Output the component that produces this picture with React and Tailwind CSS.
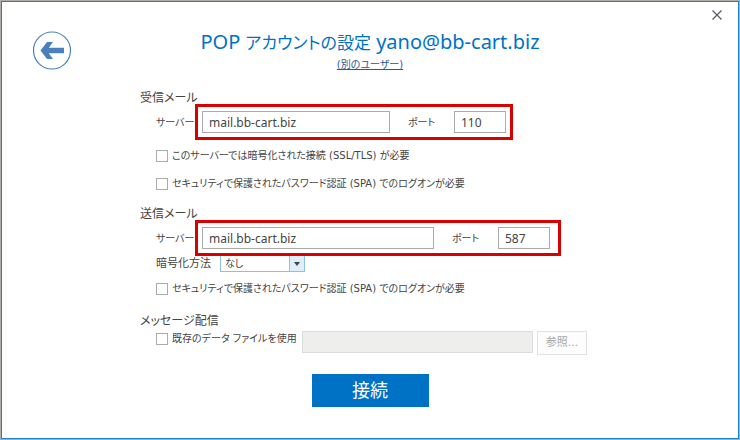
import React, { useState } from 'react';

const inputClass = "h-[22px] border border-[#ababab] bg-white px-1.5 font-['Noto_Sans',sans-serif] text-xs text-[#444] outline-none";

const BackIcon = () => (
  <svg width="40" height="40" viewBox="0 0 40 40" fill="none">
    <circle cx="20" cy="20.5" r="18.5" stroke="#4a80bd" strokeWidth="1.2" />
    <path d="M8.5 20.5 L15 12 H21 L16.8 17.8 H32 V23.2 H16.8 L21 29 H15 Z" fill="#4a80bd" />
  </svg>
);

const CloseIcon = () => (
  <svg width="10" height="10" viewBox="0 0 10 10" stroke="#555" strokeWidth="1.1">
    <path d="M0.5 0.5 L9.5 9.5 M9.5 0.5 L0.5 9.5" />
  </svg>
);

const CheckOption = ({ id, label }) => {
  const [checked, setChecked] = useState(false);

  return (
    <div className="flex h-4 items-center gap-1">
      <input
        id={id}
        type="checkbox"
        checked={checked}
        onChange={(e) => setChecked(e.target.checked)}
        className="size-3 shrink-0 appearance-none border border-[#ababab] bg-white checked:bg-[#0072c6]"
      />
      <label htmlFor={id} className="whitespace-nowrap text-[10px] leading-4">
        {label}
      </label>
    </div>
  );
};

const ServerRow = ({ id, server, port, boxClass, serverWidth }) => (
  <div className="flex items-center pl-4">
    <label htmlFor={`${id}-server`} className="w-[39px] whitespace-nowrap text-[10px]">
      サーバー
    </label>
    <div className={`flex h-9 items-center border-3 border-[#d90000] pl-1 ${boxClass}`}>
      <input id={`${id}-server`} defaultValue={server} className={`${inputClass} ${serverWidth}`} />
      <label htmlFor={`${id}-port`} className="w-16 pl-[18px] text-[10px]">
        ポート
      </label>
      <input id={`${id}-port`} defaultValue={port} className={`${inputClass} w-[52px]`} />
    </div>
  </div>
);

const App = () => {
  const [encryption, setEncryption] = useState('none');

  return (
    <div className="flex min-h-screen bg-[#b0aca8] p-px font-['DejaVu_Sans','Noto_Sans_CJK_JP',sans-serif] text-[#444] [font-feature-settings:'palt']">
      <div className="flex-1 border border-[#1b82cf] bg-white">
        {/* Header */}
        <header className="flex items-start">
          <div className="w-20 pt-7 pl-[30px]">
            <button type="button" aria-label="戻る" className="block">
              <BackIcon />
            </button>
          </div>
          <div className="flex-1 pt-[26px] text-center">
            <h1 className="font-['Noto_Sans','Noto_Sans_CJK_JP',sans-serif] text-xl leading-7 text-[#0072c6]">
              POP <span className="text-[17px]">アカウントの設定</span> yano@bb-cart.biz
            </h1>
            <a href="#user" className="block text-[10px] leading-4 text-[#2b579a] underline">
              (別のユーザー)
            </a>
          </div>
          <div className="flex w-20 justify-end pt-2 pr-4">
            <button type="button" aria-label="閉じる" className="block">
              <CloseIcon />
            </button>
          </div>
        </header>

        <form className="mx-auto max-w-[460px] pt-[15px]" onSubmit={(e) => e.preventDefault()}>
          {/* Incoming mail */}
          <section>
            <h2 className="h-4 text-xs leading-5">受信メール</h2>
            <ServerRow
              id="incoming"
              server="mail.bb-cart.biz"
              port="110"
              boxClass="pr-1"
              serverWidth="w-[188px]"
            />
            <div className="space-y-3 pt-2 pl-4">
              <CheckOption id="incoming-ssl" label="このサーバーでは暗号化された接続 (SSL/TLS) が必要" />
              <CheckOption id="incoming-spa" label="セキュリティで保護されたパスワード認証 (SPA) でのログオンが必要" />
            </div>
          </section>

          {/* Outgoing mail */}
          <section className="pt-3">
            <h2 className="h-4 text-xs leading-5">送信メール</h2>
            <ServerRow
              id="outgoing"
              server="mail.bb-cart.biz"
              port="587"
              boxClass="pr-2"
              serverWidth="w-[232px]"
            />
            <div className="flex h-4 items-center gap-2 pl-4">
              <label htmlFor="encryption" className="w-14 whitespace-nowrap text-[11px] leading-4">
                暗号化方法
              </label>
              <div className="relative">
                <select
                  id="encryption"
                  value={encryption}
                  onChange={(e) => setEncryption(e.target.value)}
                  className="block h-4 w-[85px] appearance-none border border-t-0 border-[#8fbfe8] bg-white pl-1 text-[10px] outline-none"
                >
                  <option value="none">なし</option>
                  <option value="ssl">SSL/TLS</option>
                  <option value="auto">自動</option>
                </select>
                <span className="pointer-events-none absolute inset-y-0 right-0 flex w-4 items-center justify-center border border-t-0 border-[#8fbfe8] bg-[#deeefa]">
                  <svg width="6" height="4" viewBox="0 0 6 4" fill="#444">
                    <path d="M0 0 H6 L3 4 Z" />
                  </svg>
                </span>
              </div>
            </div>
            <div className="pt-[9px] pl-4">
              <CheckOption id="outgoing-spa" label="セキュリティで保護されたパスワード認証 (SPA) でのログオンが必要" />
            </div>
          </section>

          {/* Message delivery */}
          <section className="pt-3">
            <h2 className="h-[22px] text-xs leading-6">メッセージ配信</h2>
            <div className="flex items-start pl-4">
              <div className="w-[146px]">
                <CheckOption id="data-file" label="既存のデータ ファイルを使用" />
              </div>
              <input
                disabled
                aria-label="データ ファイル"
                className="h-[22px] min-w-0 flex-1 border border-[#dcdcdc] bg-[#eeeeec]"
              />
              <button
                type="button"
                disabled
                className="mr-[13px] ml-1 h-6 w-[50px] border border-[#e1e1e1] bg-[#fdfdfd] text-[11px] text-[#a6a6a6]"
              >
                参照...
              </button>
            </div>
          </section>

          <div className="flex justify-center pt-[19px]">
            <button type="submit" className="h-[33px] w-[117px] bg-[#0072c6] text-lg text-white">
              接続
            </button>
          </div>
        </form>
      </div>
    </div>
  );
};

export default App;
